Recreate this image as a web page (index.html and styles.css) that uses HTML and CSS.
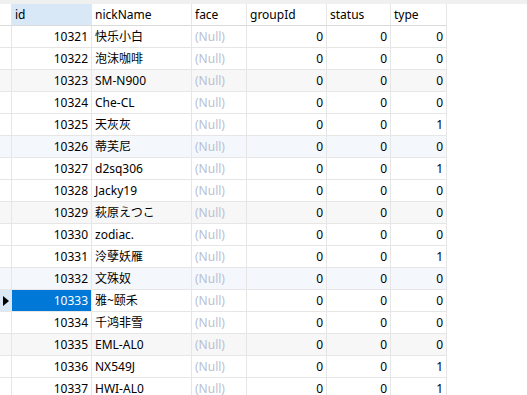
FILE: index.html
```html
<!DOCTYPE html>
<html lang="zh">
<head>
  <meta charset="UTF-8" />
  <title>user</title>
  <link rel="stylesheet" href="styles.css">
</head>
<body>

<div class="top-strip"></div>

<div class="grid">
  <div class="row head">
    <div class="cell mark"></div>
    <div class="cell active">id</div>
    <div class="cell">nickName</div>
    <div class="cell">face</div>
    <div class="cell">groupId</div>
    <div class="cell">status</div>
    <div class="cell">type</div>
  </div>

  <div class="row">
    <div class="cell mark"></div><div class="cell num">10321</div><div class="cell">快乐小白</div>
    <div class="cell null">(Null)</div><div class="cell num">0</div><div class="cell num">0</div><div class="cell num">0</div>
  </div>
  <div class="row">
    <div class="cell mark"></div><div class="cell num">10322</div><div class="cell">泡沫咖啡</div>
    <div class="cell null">(Null)</div><div class="cell num">0</div><div class="cell num">0</div><div class="cell num">0</div>
  </div>
  <div class="row gray">
    <div class="cell mark"></div><div class="cell num">10323</div><div class="cell">SM-N900</div>
    <div class="cell null">(Null)</div><div class="cell num">0</div><div class="cell num">0</div><div class="cell num">0</div>
  </div>
  <div class="row">
    <div class="cell mark"></div><div class="cell num">10324</div><div class="cell">Che-CL</div>
    <div class="cell null">(Null)</div><div class="cell num">0</div><div class="cell num">0</div><div class="cell num">0</div>
  </div>
  <div class="row">
    <div class="cell mark"></div><div class="cell num">10325</div><div class="cell">天灰灰</div>
    <div class="cell null">(Null)</div><div class="cell num">0</div><div class="cell num">0</div><div class="cell num">1</div>
  </div>
  <div class="row tint">
    <div class="cell mark"></div><div class="cell num">10326</div><div class="cell">蒂芙尼</div>
    <div class="cell null">(Null)</div><div class="cell num">0</div><div class="cell num">0</div><div class="cell num">0</div>
  </div>
  <div class="row">
    <div class="cell mark"></div><div class="cell num">10327</div><div class="cell">d2sq306</div>
    <div class="cell null">(Null)</div><div class="cell num">0</div><div class="cell num">0</div><div class="cell num">1</div>
  </div>
  <div class="row">
    <div class="cell mark"></div><div class="cell num">10328</div><div class="cell">Jacky19</div>
    <div class="cell null">(Null)</div><div class="cell num">0</div><div class="cell num">0</div><div class="cell num">0</div>
  </div>
  <div class="row gray">
    <div class="cell mark"></div><div class="cell num">10329</div><div class="cell">萩原えつこ</div>
    <div class="cell null">(Null)</div><div class="cell num">0</div><div class="cell num">0</div><div class="cell num">0</div>
  </div>
  <div class="row">
    <div class="cell mark"></div><div class="cell num">10330</div><div class="cell">zodiac.</div>
    <div class="cell null">(Null)</div><div class="cell num">0</div><div class="cell num">0</div><div class="cell num">0</div>
  </div>
  <div class="row">
    <div class="cell mark"></div><div class="cell num">10331</div><div class="cell">泠孽妖雁</div>
    <div class="cell null">(Null)</div><div class="cell num">0</div><div class="cell num">0</div><div class="cell num">1</div>
  </div>
  <div class="row tint">
    <div class="cell mark"></div><div class="cell num">10332</div><div class="cell">文殊奴</div>
    <div class="cell null">(Null)</div><div class="cell num">0</div><div class="cell num">0</div><div class="cell num">0</div>
  </div>
  <div class="row selected">
    <div class="cell mark">
      <svg width="6" height="10" viewBox="0 0 6 10"><polygon points="0,0 6,5 0,10" fill="#000"/></svg>
    </div>
    <div class="cell num">10333</div><div class="cell">雅~颐禾</div>
    <div class="cell null">(Null)</div><div class="cell num">0</div><div class="cell num">0</div><div class="cell num">0</div>
  </div>
  <div class="row">
    <div class="cell mark"></div><div class="cell num">10334</div><div class="cell">千鸿非雪</div>
    <div class="cell null">(Null)</div><div class="cell num">0</div><div class="cell num">0</div><div class="cell num">0</div>
  </div>
  <div class="row gray">
    <div class="cell mark"></div><div class="cell num">10335</div><div class="cell">EML-AL0</div>
    <div class="cell null">(Null)</div><div class="cell num">0</div><div class="cell num">0</div><div class="cell num">0</div>
  </div>
  <div class="row">
    <div class="cell mark"></div><div class="cell num">10336</div><div class="cell">NX549J</div>
    <div class="cell null">(Null)</div><div class="cell num">0</div><div class="cell num">0</div><div class="cell num">1</div>
  </div>
  <div class="row">
    <div class="cell mark"></div><div class="cell num">10337</div><div class="cell">HWI-AL0</div>
    <div class="cell null">(Null)</div><div class="cell num">0</div><div class="cell num">0</div><div class="cell num">1</div>
  </div>
</div>

</body>
</html>
```

FILE: styles.css
```css
* { box-sizing: border-box; margin: 0; padding: 0; }

body {
  background: #fff;
  font-family: "Noto Sans", "Noto Sans CJK SC", sans-serif;
  font-size: 12px;
  color: #000;
  overflow: hidden;
}

.top-strip {
  height: 4px;
  background: #f0f0f0;
}

.row {
  display: grid;
  grid-template-columns: 12px 80px 100px 55px 80px 64px 56px;
  width: 447px;
  height: 22px;
}

.cell {
  border-right: 1px solid #e6e6e6;
  border-bottom: 1px solid #e6e6e6;
  padding: 0 3px;
  line-height: 21px;
  white-space: nowrap;
  overflow: hidden;
}

.head .cell { border-bottom-color: #dadada; }
.head .active { background: #d9e8f7; }

.mark {
  padding: 0;
  display: flex;
  align-items: center;
  justify-content: center;
}

.num { text-align: right; }
.null { color: #b9bfd3; }

.gray .cell { background: #f7f7f7; }
.tint .cell { background: #f4f8fd; }

.selected .mark { background: #dbe8f6; }
.selected .num:nth-child(2) { background: #0078d7; color: #fff; }
```
